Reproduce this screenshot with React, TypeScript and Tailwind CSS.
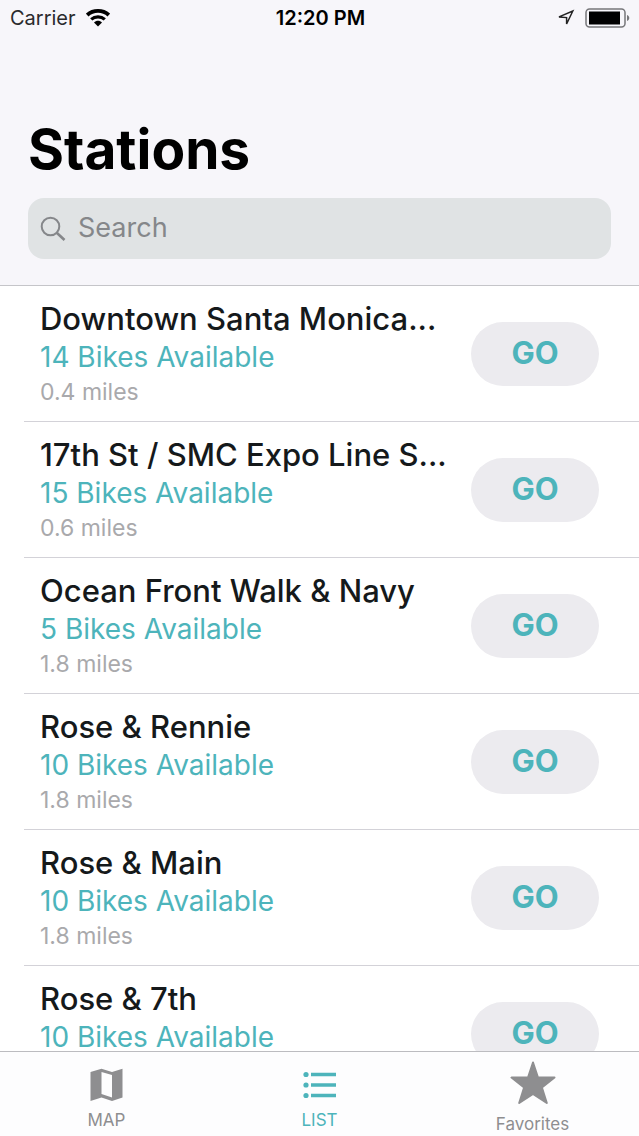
import { useState } from "react";

const stations = [
  { name: "Downtown Santa Monica...", bikes: 14, distance: "0.4 miles" },
  { name: "17th St / SMC Expo Line S...", bikes: 15, distance: "0.6 miles" },
  { name: "Ocean Front Walk & Navy", bikes: 5, distance: "1.8 miles" },
  { name: "Rose & Rennie", bikes: 10, distance: "1.8 miles" },
  { name: "Rose & Main", bikes: 10, distance: "1.8 miles" },
  { name: "Rose & 7th", bikes: 10, distance: "1.8 miles" },
];

const WifiIcon = () => (
  <svg width="24" height="18" viewBox="0 0 24 18" fill="none" aria-hidden="true">
    <path d="M1.2 6C7.2.6 16.8.6 22.8 6" stroke="#000" strokeWidth="3.8" />
    <path d="M5.2 10.4c3.8-3.5 9.8-3.5 13.6 0" stroke="#000" strokeWidth="3.2" />
    <path d="M12 17.6 8 13.4c2.3-2.1 5.7-2.1 8 0Z" fill="#000" />
  </svg>
);

const LocationIcon = () => (
  <svg width="18" height="18" viewBox="0 0 18 18" fill="none" aria-hidden="true">
    <path d="M15.8 2 9.600 15V8.600L2 7.900Z" stroke="#222" strokeWidth="1.500" />
  </svg>
);

const BatteryIcon = () => (
  <svg width="46" height="20" viewBox="0 0 46 20" fill="none" aria-hidden="true">
    <rect x="1" y="1" width="39" height="18" rx="3.5" stroke="#77777a" strokeWidth="1.5" />
    <rect x="4" y="3.5" width="31" height="13" fill="#000" />
    <path d="M42 7c3 .8 3 5.2 0 6Z" fill="#77777a" />
  </svg>
);

const SearchIcon = () => (
  <svg width="26" height="26" viewBox="0 0 26 26" fill="none" aria-hidden="true">
    <circle cx="10.5" cy="10.5" r="8.8" stroke="#85878a" strokeWidth="2" />
    <path d="m17 17 7.5 7" stroke="#85878a" strokeWidth="2.6" />
  </svg>
);

const MapIcon = () => (
  <svg width="34" height="34" viewBox="0 0 34 34" aria-hidden="true">
    <path
      fill="currentColor"
      fillRule="evenodd"
      d="M.5 4 11.5.8 22 4 32.5.8v28.700L22 33 11.500 29.500.5 33ZM11.500 4v22L22 29.500V7Z"
    />
  </svg>
);

const ListIcon = () => (
  <svg width="34" height="34" viewBox="0 0 34 34" fill="currentColor" aria-hidden="true">
    <circle cx="3" cy="6.5" r="2.6" />
    <circle cx="3" cy="17" r="2.6" />
    <circle cx="3" cy="27.5" r="2.6" />
    <path d="M8 4.800h25v3.400H8ZM8 15.300h25v3.400H8ZM8 25.800h25v3.400H8Z" />
  </svg>
);

const StarIcon = () => (
  <svg width="46" height="44" viewBox="0 0 46 44" aria-hidden="true">
    <path
      d="M23 2.500 27.900 17.300 44.500 17.500 31.900 27.500 36.800 43 23 33.800 9.200 43 14.100 27.500 1.500 17.500 18.100 17.300Z"
      fill="currentColor"
      stroke="currentColor"
      strokeWidth="2"
      strokeLinejoin="round"
    />
  </svg>
);

const tabs = [
  { id: "map", label: "MAP", icon: MapIcon, className: "gap-1.5 pt-4" },
  { id: "list", label: "LIST", icon: ListIcon, className: "gap-1.5 pt-4" },
  { id: "favorites", label: "Favorites", icon: StarIcon, className: "gap-2 pt-2" },
];

export default function App() {
  const [query, setQuery] = useState("");
  const [active, setActive] = useState("list");

  const visible = stations.filter((s) => s.name.toLowerCase().includes(query.toLowerCase()));

  return (
    <div className="flex h-screen flex-col overflow-hidden bg-white font-['Inter',sans-serif]">
      <header className="shrink-0 border-b border-[#c5c5c9] bg-[#f7f6fa]">
        <div className="grid h-9 grid-cols-3 items-center pr-2 pl-2.5 text-xl text-black">
          <div className="flex items-center gap-2.5 text-[#2a2a2c]">
            Carrier
            <WifiIcon />
          </div>
          <div className="text-center font-semibold">12:20 PM</div>
          <div className="flex items-center justify-end gap-2.5">
            <LocationIcon />
            <BatteryIcon />
          </div>
        </div>
        <div className="px-7 pt-20 pb-[26px]">
          <h1 className="text-[55px] leading-[66px] font-bold text-black">Stations</h1>
          <label className="mt-4 flex h-[61px] items-center gap-3 rounded-2xl bg-[#e0e3e4] px-3">
            <SearchIcon />
            <input
              type="search"
              aria-label="Search"
              placeholder="Search"
              value={query}
              onChange={(e) => setQuery(e.target.value)}
              className="min-w-0 flex-1 bg-transparent text-[27px] text-black outline-none placeholder:text-[#85878a]"
            />
          </label>
        </div>
      </header>

      <main className="min-h-0 flex-1 overflow-y-auto [scrollbar-width:none]">
        <ul className="pl-6">
          {visible.map((station) => (
            <li
              key={station.name}
              className="flex h-[136px] items-center justify-between border-b border-[#d3d2d8] pr-10 pl-4"
            >
              <div className="min-w-0 whitespace-nowrap">
                <h2 className="text-[31px] leading-[38px] font-medium text-[#15191b]">{station.name}</h2>
                <p className="text-[28px] leading-[38px] text-[#4db4bb]">{station.bikes} Bikes Available</p>
                <p className="text-[23px] leading-8 text-[#a9a9ac]">{station.distance}</p>
              </div>
              <button
                type="button"
                className="h-16 w-32 shrink-0 rounded-full bg-[#ecebef] text-[31px] font-bold text-[#4db4bb]"
              >
                GO
              </button>
            </li>
          ))}
        </ul>
      </main>

      <nav className="grid h-[85px] shrink-0 grid-cols-3 border-t border-[#bcbcc0] bg-[#fdfdfe]">
        {tabs.map((tab) => {
          const Icon = tab.icon;
          return (
            <button
              key={tab.id}
              type="button"
              onClick={() => setActive(tab.id)}
              className={`flex flex-col items-center text-[17px] ${tab.className} ${
                active === tab.id ? "text-[#4db4bb]" : "text-[#8e8e90]"
              }`}
            >
              <Icon />
              <span>{tab.label}</span>
            </button>
          );
        })}
      </nav>
    </div>
  );
}
